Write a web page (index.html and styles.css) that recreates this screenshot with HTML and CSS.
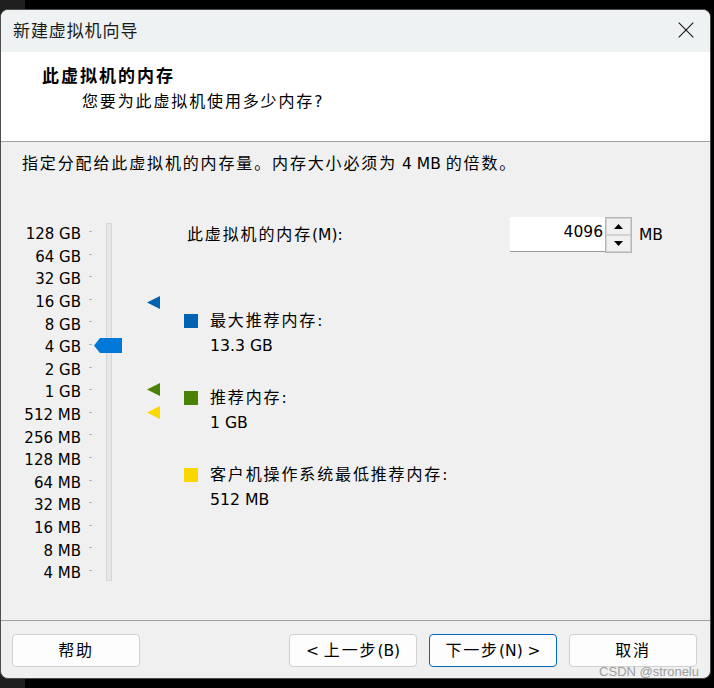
FILE: index.html
```html
<!DOCTYPE html>
<html lang="zh-CN">
<head>
<meta charset="utf-8">
<title>新建虚拟机向导</title>
<link rel="stylesheet" href="styles.css">
</head>
<body>
<div class="desk">
  <div class="window">
    <div class="titlebar">
      <span class="title">新建虚拟机向导</span>
      <svg class="close" width="16" height="16" viewBox="0 0 16 16"><path d="M0.7 0.7L15.3 15.3M15.3 0.7L0.7 15.3" stroke="#1c1c1c" stroke-width="1.15" fill="none"/></svg>
    </div>
    <div class="header">
      <div class="h-title">此虚拟机的内存</div>
      <div class="h-sub"><span class="zh">您要为此虚拟机使用多少内存</span>?</div>
    </div>
    <div class="content">
      <p class="desc"><span class="zh">指定分配给此虚拟机的内存量。内存大小必须为</span> 4 MB <span class="zh">的倍数。</span></p>
      <div class="main">
        <div class="scale">
          <div class="track"></div>
          <svg class="thumb" width="28" height="15" viewBox="0 0 28 15"><polygon points="0,7.5 6,0 28,0 28,15 6,15" fill="#0078d7"/></svg>
          <svg class="marker m-max" width="13" height="13" viewBox="0 0 13 13"><polygon points="0,6.5 13,0 13,13" fill="#0063b1"/></svg>
          <svg class="marker m-rec" width="13" height="13" viewBox="0 0 13 13"><polygon points="0,6.5 13,0 13,13" fill="#498205"/></svg>
          <svg class="marker m-min" width="13" height="13" viewBox="0 0 13 13"><polygon points="0,6.5 13,0 13,13" fill="#fcd600"/></svg>
          <span class="lbl">128 GB</span><i class="tick"></i>
          <span class="lbl">64 GB</span><i class="tick"></i>
          <span class="lbl">32 GB</span><i class="tick"></i>
          <span class="lbl">16 GB</span><i class="tick"></i>
          <span class="lbl">8 GB</span><i class="tick"></i>
          <span class="lbl">4 GB</span><i class="tick"></i>
          <span class="lbl">2 GB</span><i class="tick"></i>
          <span class="lbl">1 GB</span><i class="tick"></i>
          <span class="lbl">512 MB</span><i class="tick"></i>
          <span class="lbl">256 MB</span><i class="tick"></i>
          <span class="lbl">128 MB</span><i class="tick"></i>
          <span class="lbl">64 MB</span><i class="tick"></i>
          <span class="lbl">32 MB</span><i class="tick"></i>
          <span class="lbl">16 MB</span><i class="tick"></i>
          <span class="lbl">8 MB</span><i class="tick"></i>
          <span class="lbl">4 MB</span><i class="tick"></i>
        </div>
        <div class="settings">
          <div class="mem-row">
            <div class="mem-label"><span class="zh">此虚拟机的内存</span>(M):</div>
            <div class="mem-input">4096</div>
            <div class="spin">
              <div class="spin-btn"><svg width="9" height="5" viewBox="0 0 9 5"><polygon points="0,5 4.5,0 9,5" fill="#000"/></svg></div>
              <div class="spin-btn"><svg width="9" height="5" viewBox="0 0 9 5"><polygon points="0,0 9,0 4.5,5" fill="#000"/></svg></div>
            </div>
            <div class="unit">MB</div>
          </div>
          <div class="legend">
            <div class="item">
              <span class="sw sw-max"></span>
              <div class="item-text">
                <div class="line"><span class="zh">最大推荐内存</span>:</div>
                <div class="line val">13.3 GB</div>
              </div>
            </div>
            <div class="item">
              <span class="sw sw-rec"></span>
              <div class="item-text">
                <div class="line"><span class="zh">推荐内存</span>:</div>
                <div class="line val">1 GB</div>
              </div>
            </div>
            <div class="item">
              <span class="sw sw-min"></span>
              <div class="item-text">
                <div class="line"><span class="zh">客户机操作系统最低推荐内存</span>:</div>
                <div class="line val">512 MB</div>
              </div>
            </div>
          </div>
        </div>
      </div>
    </div>
    <div class="footer">
      <button class="btn btn-help"><span class="btn-text"><span class="zh">帮助</span></span></button>
      <button class="btn"><span class="btn-text">&lt; <span class="zh">上一步</span>(B)</span></button>
      <button class="btn btn-next"><span class="btn-text"><span class="zh">下一步</span>(N) &gt;</span></button>
      <button class="btn"><span class="btn-text"><span class="zh">取消</span></span></button>
    </div>
    <div class="watermark">CSDN @stronelu</div>
  </div>
</div>
</body>
</html>
```

FILE: styles.css
```css
* { box-sizing: border-box; }
html, body { margin: 0; padding: 0; }
body {
  width: 714px;
  height: 688px;
  overflow: hidden;
  background: linear-gradient(to right, #1f1f1f 25px, #000 25px);
  font-family: "DejaVu Sans", "Noto Sans CJK SC", sans-serif;
  font-size: 15.5px;
  color: #000;
}
.desk { padding-top: 9px; }
.window {
  position: relative;
  width: 711px;
  height: 670px;
  border: 1px solid #4d4d4d;
  border-radius: 8px;
  overflow: hidden;
  background: #f0f0f0;
  display: flex;
  flex-direction: column;
}
.zh {
  font-family: "Noto Sans CJK SC", sans-serif;
  font-size: 16px;
  letter-spacing: 1.86px;
  line-height: 1;
}
.titlebar {
  flex: none;
  height: 42px;
  background: #eef2f3;
  display: flex;
  align-items: center;
  justify-content: space-between;
  padding: 0 16px 3px 12px;
}
.title {
  font-family: "Noto Sans CJK SC", sans-serif;
  font-size: 17px;
  letter-spacing: 0.9px;
  line-height: 24px;
  color: #1a1a1a;
}
.close { display: block; }
.header {
  flex: none;
  height: 90px;
  background: #fff;
  border-bottom: 1px solid #a0a0a0;
  padding: 11px 0 0 41px;
}
.h-title {
  font-family: "Noto Sans CJK SC", sans-serif;
  font-weight: 700;
  font-size: 17px;
  letter-spacing: 2px;
  line-height: 24px;
}
.h-sub {
  margin: 3px 0 0 40px;
  height: 24px;
  line-height: 24px;
}
.content {
  flex: 1;
  padding: 10px 0 0 21px;
}
.desc {
  margin: 0;
  height: 24px;
  line-height: 24px;
}
.main {
  margin-top: 41px;
  display: flex;
  align-items: flex-start;
}
.scale {
  display: grid;
  grid-template-columns: 59px 8px 3px 2px 12px 6px 10px 25px 13px;
  grid-template-rows: repeat(16, 22.6px);
  padding-top: 4.7px;
  font-size: 15px;
}
.lbl {
  grid-column: 1;
  text-align: right;
  padding-top: 1.5px;
  line-height: 22.6px;
  white-space: nowrap;
}
.tick {
  grid-column: 3;
  align-self: center;
  height: 1px;
  margin-top: -3px;
  background: #b4b4b4;
}
.track {
  grid-column: 6;
  grid-row: 1 / -1;
  margin: 1.3px 0 2.3px;
  background: #e7e7e7;
  border: 1px solid #d6d6d6;
}
.thumb {
  grid-column: 5 / 8;
  grid-row: 6;
  align-self: center;
  display: block;
  position: relative;
  z-index: 1;
}
.marker {
  grid-column: 9;
  align-self: center;
  display: block;
}
.m-max { grid-row: 4; margin-top: 3.4px; }
.m-rec { grid-row: 8; margin-top: -3.4px; }
.m-min { grid-row: 9; margin-top: -3.4px; }
.settings { margin-left: 24px; }
.mem-row {
  display: flex;
  align-items: center;
  height: 36px;
}
.mem-label {
  width: 326px;
  padding-left: 3px;
  line-height: 24px;
}
.mem-input {
  width: 95px;
  height: 35px;
  align-self: flex-start;
  background: #fff;
  border-bottom: 1px solid #9a9a9a;
  text-align: right;
  padding-right: 2px;
  line-height: 31px;
}
.spin {
  width: 27px;
  height: 36px;
  border: 1px solid #b5b5b5;
  display: flex;
  flex-direction: column;
}
.spin-btn {
  flex: 1;
  border: 1px solid #d2d2d2;
  background: #f0f0f0;
  display: flex;
  align-items: center;
  justify-content: center;
}
.spin-btn svg { display: block; }
.unit { margin-left: 7px; line-height: 24px; }
.legend {
  margin-top: 56px;
  display: flex;
  flex-direction: column;
  gap: 29px;
}
.item {
  display: flex;
  align-items: flex-start;
}
.sw {
  flex: none;
  width: 14px;
  height: 14px;
  margin: 5px 12px 0 0;
}
.sw-max { background: #0063b1; }
.sw-rec { background: #498205; }
.sw-min { background: #fcd600; }
.line {
  height: 24px;
  line-height: 24px;
}
.val { font-size: 15.7px; padding-top: 1px; }
.footer {
  flex: none;
  height: 58px;
  border-top: 1px solid #a0a0a0;
  padding: 13px 13px 0 11px;
  display: flex;
  align-items: flex-start;
  gap: 12px;
}
.btn {
  width: 128px;
  height: 33px;
  padding: 0;
  border: 1px solid #d0d0d0;
  border-radius: 4px;
  background: #fdfdfd;
  display: flex;
  align-items: center;
  justify-content: center;
  font: inherit;
  color: #000;
}
.btn-text {
  line-height: 24px;
  white-space: pre;
}
.btn-help { margin-right: auto; }
.btn-next { border-color: #0067c0; }
.watermark {
  position: absolute;
  right: 11px;
  bottom: -1px;
  font-family: "Liberation Sans", sans-serif;
  font-size: 13px;
  line-height: 15px;
  color: #9d9d9d;
}
```
